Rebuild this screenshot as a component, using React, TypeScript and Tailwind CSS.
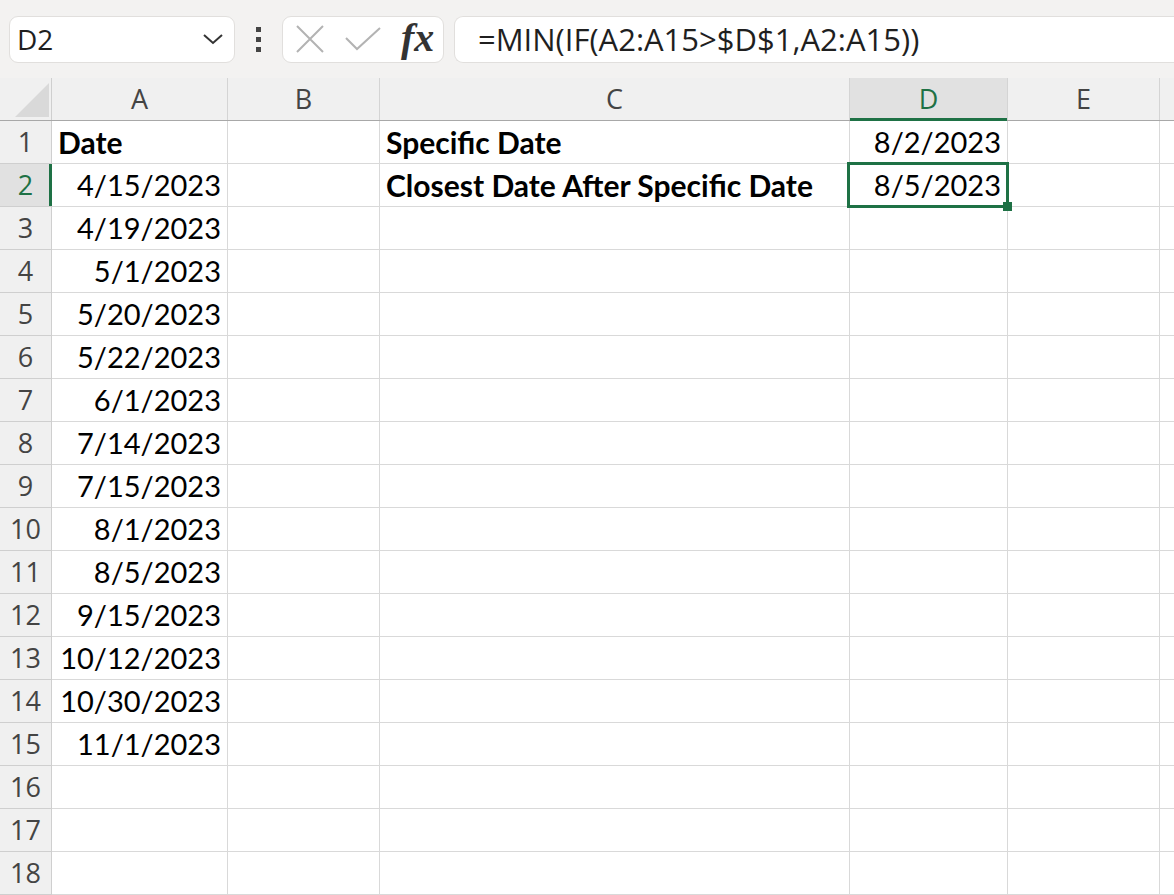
import React from "react";

const cols = [
  { key: "A", w: "w-[176px]" },
  { key: "B", w: "w-[152px]" },
  { key: "C", w: "w-[470px]" },
  { key: "D", w: "w-[158px]" },
  { key: "E", w: "w-[152px]" },
];

const dates = [
  "4/15/2023",
  "4/19/2023",
  "5/1/2023",
  "5/20/2023",
  "5/22/2023",
  "6/1/2023",
  "7/14/2023",
  "7/15/2023",
  "8/1/2023",
  "8/5/2023",
  "9/15/2023",
  "10/12/2023",
  "10/30/2023",
  "11/1/2023",
];

const cellFont = { fontFamily: "Lato, 'Liberation Sans', sans-serif" };
const uiFont = { fontFamily: "'Open Sans', 'Noto Sans', sans-serif" };

function cellContent(row: number, col: string): { text: string; bold?: boolean; right?: boolean } | null {
  if (col === "A") {
    if (row === 1) return { text: "Date", bold: true };
    if (row >= 2 && row <= 15) return { text: dates[row - 2], right: true };
  }
  if (col === "C") {
    if (row === 1) return { text: "Specific Date", bold: true };
    if (row === 2) return { text: "Closest Date After Specific Date", bold: true };
  }
  if (col === "D") {
    if (row === 1) return { text: "8/2/2023", right: true };
    if (row === 2) return { text: "8/5/2023", right: true };
  }
  return null;
}

function Toolbar() {
  return (
    <div className="h-[78px] bg-[#f3f2f1] flex items-center pl-[9px]" style={uiFont}>
      {/* name box */}
      <div className="w-[226px] h-[47px] bg-white border border-[#e1dfdd] rounded-[9px] flex items-center justify-between pl-[7px] pr-[10px]">
        <span className="text-[28px] text-[#1f1f1f] leading-none">D2</span>
        <svg width="22" height="14" viewBox="0 0 22 14">
          <path d="M2 3 L11 11 L20 3" fill="none" stroke="#333" strokeWidth="2" />
        </svg>
      </div>
      {/* dots */}
      <div className="w-[47px] flex flex-col items-center gap-[5px]">
        <div className="w-[5px] h-[5px] bg-[#444]" />
        <div className="w-[5px] h-[5px] bg-[#444]" />
        <div className="w-[5px] h-[5px] bg-[#444]" />
      </div>
      {/* fx box */}
      <div className="w-[162px] h-[47px] bg-white border border-[#e1dfdd] rounded-[9px] flex items-center pl-[13px]">
        <svg width="28" height="28" viewBox="0 0 28 28">
          <path d="M1 1 L27 27 M27 1 L1 27" stroke="#b3b3b3" strokeWidth="2" fill="none" />
        </svg>
        <svg width="36" height="26" viewBox="0 0 36 26" className="ml-[21px]">
          <path d="M1 12 L12 23 L35 2" stroke="#b3b3b3" strokeWidth="2" fill="none" />
        </svg>
        <span
          className="ml-[20px] text-[40px] italic font-bold text-[#333] leading-none mt-[-2px]"
          style={{ fontFamily: "'Liberation Serif', 'DejaVu Serif', serif" }}
        >
          fx
        </span>
      </div>
      {/* formula */}
      <div className="ml-[10px] flex-1 h-[47px] bg-white border border-r-0 border-[#e1dfdd] rounded-l-[9px] flex items-center pl-[23px]">
        <span className="text-[31px] text-[#1f1f1f] leading-none">=MIN(IF(A2:A15&gt;$D$1,A2:A15))</span>
      </div>
    </div>
  );
}

function HeaderRow() {
  return (
    <div className="flex h-[43px] bg-[#f0f0f0] border-b border-[#a8a8a8]" style={uiFont}>
      <div className="w-[52px] h-full border-r border-[#cfcfcf] relative shrink-0">
        <svg width="52" height="42" viewBox="0 0 52 42" className="absolute left-0 top-0">
          <polygon points="49,5 49,39 15,39" fill="#d9d9d9" />
        </svg>
      </div>
      {cols.map((c) => {
        const sel = c.key === "D";
        return (
          <div
            key={c.key}
            className={`${c.w} shrink-0 h-full border-r border-[#d4d4d4] flex items-center justify-center text-[27px] relative ${
              sel ? "bg-[#e1e1e1] text-[#1e7145]" : "text-[#444]"
            }`}
          >
            {c.key}
            {sel && <div className="absolute left-0 right-0 bottom-[-1px] h-[3px] bg-[#1e7145]" />}
          </div>
        );
      })}
      <div className="flex-1" />
    </div>
  );
}

function Row({ n }: { n: number }) {
  const selRow = n === 2;
  return (
    <div className={`flex h-[43px] relative ${selRow ? "z-10" : ""}`}>
      <div
        className={`w-[52px] shrink-0 h-full border-r border-b border-[#cfcfcf] flex items-center justify-center text-[27px] relative ${
          selRow ? "bg-[#e1e1e1] text-[#1e7145]" : "bg-[#f0f0f0] text-[#444]"
        }`}
        style={uiFont}
      >
        {n}
        {selRow && <div className="absolute top-0 bottom-0 right-[-1px] w-[3px] bg-[#1e7145]" />}
      </div>
      {cols.map((c) => {
        const content = cellContent(n, c.key);
        const selected = n === 2 && c.key === "D";
        return (
          <div
            key={c.key}
            className={`${c.w} shrink-0 h-full border-r border-b border-[#d9d9d9] flex items-center px-[6px] text-black relative whitespace-nowrap ${
              content?.right ? "justify-end" : "justify-start"
            } ${content?.bold ? "font-bold text-[30px]" : "text-[29px]"} ${selected ? "z-10" : ""}`}
            style={cellFont}
          >
            {content?.text}
            {selected && (
              <>
                <div className="absolute left-[-3px] top-[-2px] right-[-2px] bottom-[-2px] border-[3px] border-[#1e7145] pointer-events-none" />
                <div className="absolute right-[-5px] bottom-[-5px] w-[9px] h-[9px] bg-[#1e7145]" />
              </>
            )}
          </div>
        );
      })}
      <div className="flex-1 border-b border-[#d9d9d9]" />
    </div>
  );
}

export default function App() {
  const rows = Array.from({ length: 18 }, (_, i) => i + 1);
  return (
    <div className="w-[1174px] h-[895px] overflow-hidden bg-white">
      <Toolbar />
      <HeaderRow />
      {rows.map((n) => (
        <Row key={n} n={n} />
      ))}
    </div>
  );
}
